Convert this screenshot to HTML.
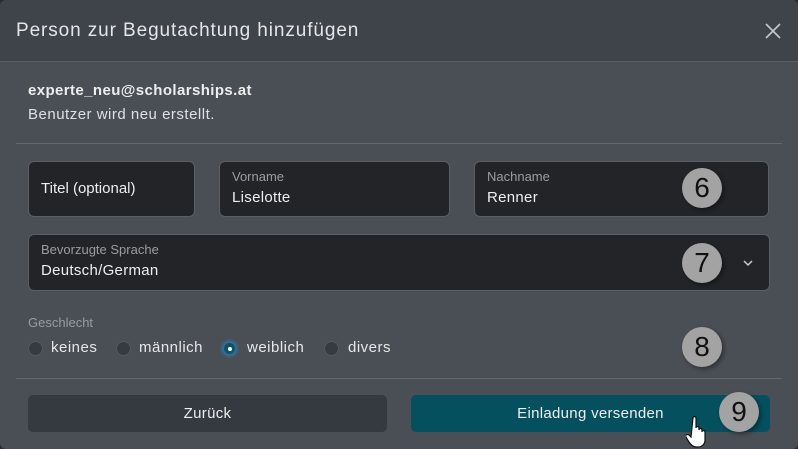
<!DOCTYPE html>
<html><head><meta charset="utf-8"><style>
*{box-sizing:border-box;margin:0;padding:0}
body{width:798px;height:449px;background:#2a2c30;font-family:"Liberation Sans",sans-serif;position:relative;overflow:hidden;color:#e8e8e8}
.modal{position:absolute;left:0;top:0;width:798px;height:449px;background:#4a4e55;border-radius:6px;overflow:hidden}
.hdr{position:absolute;left:0;top:0;width:798px;height:62px;background:#3f434a;border-bottom:1px solid #5a5e65}
.title{position:absolute;left:16px;top:20px;font-size:19px;color:#e6e6e6;letter-spacing:0.9px}
.x{position:absolute;left:764px;top:22px}
.abs{position:absolute}
.inp{position:absolute;background:#222428;border:1px solid #5a5e65;border-radius:6px}
.lbl{position:absolute;left:12px;top:7px;font-size:13px;color:#9a9ca0}
.val{position:absolute;left:12px;top:27px;font-size:15px;color:#eee;letter-spacing:0.3px}
.hr{position:absolute;left:16px;width:766px;height:1px;background:#63676e}
.badge{position:absolute;width:40px;height:40px;border-radius:50%;background:#a3a3a3;color:#111;font-size:28px;text-align:center;line-height:40px;box-shadow:2px 2px 4px rgba(0,0,0,.4)}
.radio{position:absolute;top:341px;width:15px;height:15px;border-radius:50%;background:#363a41;border:1px solid #555960}
.rl{position:absolute;top:339px;font-size:15px;color:#e8e8e8;letter-spacing:0.5px}
.btn{position:absolute;top:395px;height:37px;border-radius:5px;text-align:center;line-height:37px;font-size:15px;color:#eee;letter-spacing:0.3px}
</style></head><body>
<div class="modal">
<div class="hdr"><div class="title">Person zur Begutachtung hinzufügen</div>
<svg class="x" width="18" height="18" viewBox="0 0 18 18"><path d="M2 2L16 16M16 2L2 16" stroke="#c8c8c8" stroke-width="1.6"/></svg></div>
<div class="abs" style="left:28px;top:82px;font-size:15px;font-weight:bold;color:#eee;letter-spacing:0.4px">experte_neu@scholarships.at</div>
<div class="abs" style="left:28px;top:106px;font-size:15px;color:#e0e0e0;letter-spacing:0.5px">Benutzer wird neu erstellt.</div>
<div class="hr" style="top:143px"></div>
<div class="inp" style="left:28px;top:161px;width:167px;height:56px"><div class="abs" style="left:12px;top:18px;font-size:15px;color:#eee">Titel (optional)</div></div>
<div class="inp" style="left:219px;top:161px;width:231px;height:56px"><div class="lbl">Vorname</div><div class="val">Liselotte</div></div>
<div class="inp" style="left:474px;top:161px;width:295px;height:56px"><div class="lbl">Nachname</div><div class="val">Renner</div></div>
<div class="inp" style="left:28px;top:234px;width:742px;height:57px"><div class="lbl">Bevorzugte Sprache</div><div class="val">Deutsch/German</div>
<svg class="abs" style="left:713px;top:24px" width="12" height="8" viewBox="0 0 12 8"><path d="M2 2L6 6L10 2" stroke="#ccc" stroke-width="1.5" fill="none"/></svg></div>
<div class="abs" style="left:28px;top:315px;font-size:13px;color:#9a9ca0">Geschlecht</div>
<div class="radio" style="left:28px"></div><div class="rl" style="left:51px">keines</div>
<div class="radio" style="left:116px"></div><div class="rl" style="left:139px">männlich</div>
<div class="radio" style="left:222px;background:#0d5566;border:2px solid #3a6a8a;box-shadow:0 0 0 2px #3d5c78"><div style="position:absolute;left:3.5px;top:3.5px;width:4px;height:4px;border-radius:50%;background:#fff"></div></div><div class="rl" style="left:247px">weiblich</div>
<div class="radio" style="left:324px"></div><div class="rl" style="left:348px">divers</div>
<div class="hr" style="top:378px"></div>
<div class="btn" style="left:28px;width:359px;background:#353940">Zurück</div>
<div class="btn" style="left:411px;width:359px;background:#04505f">Einladung versenden</div>
<div class="badge" style="left:682px;top:168px">6</div>
<div class="badge" style="left:682px;top:243px">7</div>
<div class="badge" style="left:682px;top:327px">8</div>
<div class="badge" style="left:719px;top:392px">9</div>
<svg class="abs" style="left:686px;top:415px" width="26" height="34" viewBox="0 0 26 34"><path d="M7 3c0-2 3-2 3 0v10c0-2 3-2 3 0v2c0-2 3-2 3 0v2c0-2 3-2 3 0v8c0 4-3 7-7 7h-2c-3 0-5-2-7-5l-3-5c-1-2 1-3 3-2l2 2z" fill="#fff" stroke="#111" stroke-width="1.2"/></svg>
</div>
</body></html>
